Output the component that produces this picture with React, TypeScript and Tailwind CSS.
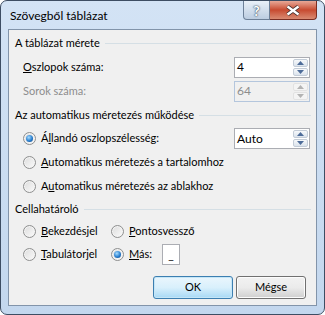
import React from "react";

const font = { fontFamily: 'Lato, "Noto Sans", sans-serif' };

function SpinArrow({ up, disabled }: { up?: boolean; disabled?: boolean }) {
  return (
    <div
      className={
        "flex flex-1 items-center justify-center rounded-[2px] border " +
        (disabled ? "border-[#e2e2e2] bg-[#f4f4f4]" : "border-[#c3ccd7] bg-gradient-to-b from-[#f7f9fb] to-[#dbe3ec]")
      }
    >
      <svg width="7" height="4" viewBox="0 0 7 4">
        <path d={up ? "M0 4 L3.5 0 L7 4 Z" : "M0 0 L3.5 4 L7 0 Z"} fill={disabled ? "#b3b3b3" : "#4d6c99"} />
      </svg>
    </div>
  );
}

function Spin({ value, disabled }: { value: string; disabled?: boolean }) {
  return (
    <div
      className={
        "flex h-[21px] w-[76px] items-stretch border " +
        (disabled ? "border-[#b4c6dd] bg-[#f0f0f0] text-[#8d8d8d]" : "border-[#abadb3] bg-white text-black")
      }
    >
      <div className="flex flex-1 items-center pl-[2px] text-[12px]">{value}</div>
      <div className="flex w-[16px] flex-col gap-px py-px pr-px">
        <SpinArrow up disabled={disabled} />
        <SpinArrow disabled={disabled} />
      </div>
    </div>
  );
}

function Radio({ checked }: { checked?: boolean }) {
  return (
    <div className="flex h-[13px] w-[13px] shrink-0 items-center justify-center rounded-full border border-[#8e8f8f] bg-gradient-to-br from-[#dcdcdc] to-[#fbfbfb] shadow-[inset_0_0_0_1px_#f4f4f4]">
      {checked && (
        <div className="h-[7px] w-[7px] rounded-full bg-[radial-gradient(circle_at_40%_35%,#a6dcff,#2a7fcf_55%,#0c3d78)]" />
      )}
    </div>
  );
}

function GroupHeader({ label, h }: { label: string; h: string }) {
  return (
    <div className={"flex items-center pl-[6px] pr-[5px] " + h}>
      <span>{label}</span>
      <div className="ml-[5px] h-px flex-1 bg-[#d5dfe5]" />
    </div>
  );
}

function RadioLabel({ label, checked }: { label: React.ReactNode; checked?: boolean }) {
  return (
    <div className="flex items-center gap-[5px]">
      <Radio checked={checked} />
      <span>{label}</span>
    </div>
  );
}

export default function App() {
  return (
    <div
      className="flex h-[315px] w-[325px] flex-col rounded-[7px] border border-[#3d4d63] bg-gradient-to-b from-[#d3e3f5] to-[#c3d7ee] text-black"
      style={font}
    >
      <div className="flex h-[28px] shrink-0 items-start">
        <div className="flex h-[29px] flex-1 items-center pl-[9px] text-[12px]">Szövegből táblázat</div>
        <div className="mr-[7px] flex h-[19px]">
          <div className="flex w-[27px] items-center justify-center rounded-bl-[4px] border border-t-0 border-[#6d8098] bg-gradient-to-b from-[#e9f0f8] to-[#bccde1] text-[14px] font-bold text-white [text-shadow:0_0_2px_#2e3f55,0_0_1px_#2e3f55]">
            ?
          </div>
          <div className="flex w-[47px] items-center justify-center rounded-br-[4px] border border-l-0 border-t-0 border-[#7a2d22] bg-gradient-to-b from-[#e7a897] via-[#c74a30] to-[#d98a72]">
            <svg width="14" height="11" viewBox="0 0 14 11">
              <path d="M1.5 1.5 L12.5 9.5 M12.5 1.5 L1.5 9.5" stroke="#3b2a28" strokeWidth="4" />
              <path d="M1.5 1.5 L12.5 9.5 M12.5 1.5 L1.5 9.5" stroke="#ffffff" strokeWidth="2.4" />
            </svg>
          </div>
        </div>
      </div>
      <div className="mx-[7px] mb-[8px] flex flex-1 flex-col border border-[#8294aa] bg-[#f0f0f0] pt-[1px] text-[11px]">
        <GroupHeader label="A táblázat mérete" h="h-[24px]" />
        <div className="flex h-[24px] items-center pl-[14px] pr-[6px]">
          <span className="flex-1">
            <span className="underline">O</span>szlopok száma:
          </span>
          <Spin value="4" />
        </div>
        <div className="flex h-[24px] items-center pl-[14px] pr-[6px] text-[#8d8d8d]">
          <span className="flex-1">Sorok száma:</span>
          <Spin value="64" disabled />
        </div>
        <GroupHeader label="Az automatikus méretezés működése" h="h-[24px]" />
        <div className="flex h-[23px] items-center pl-[14px] pr-[6px]">
          <div className="flex-1">
            <RadioLabel
              checked
              label={
                <>
                  Á<span className="underline">l</span>landó oszlopszélesség:
                </>
              }
            />
          </div>
          <Spin value="Auto" />
        </div>
        <div className="flex h-[24px] items-center pl-[14px]">
          <RadioLabel
            label={
              <>
                <span className="underline">A</span>utomatikus méretezés a tartalomhoz
              </>
            }
          />
        </div>
        <div className="flex h-[24px] items-center pl-[14px]">
          <RadioLabel
            label={
              <>
                A<span className="underline">u</span>tomatikus méretezés az ablakhoz
              </>
            }
          />
        </div>
        <GroupHeader label="Cellahatároló" h="h-[22px]" />
        <div className="grid grid-cols-[88px_auto] grid-rows-[22px_24px] pl-[14px]">
          <div className="flex items-center">
            <RadioLabel label={<><span className="underline">B</span>ekezdésjel</>} />
          </div>
          <div className="flex items-center">
            <RadioLabel label={<><span className="underline">P</span>ontosvessző</>} />
          </div>
          <div className="flex items-center">
            <RadioLabel label={<><span className="underline">T</span>abulátorjel</>} />
          </div>
          <div className="flex items-center">
            <RadioLabel checked label={<><span className="underline">M</span>ás:</>} />
            <div className="ml-[10px] flex h-[21px] w-[18px] items-end justify-center border border-[#abadb3] bg-white pb-[3px] text-[12px] leading-none">
              _
            </div>
          </div>
        </div>
        <div className="mt-[10px] flex justify-end gap-[3px] pr-[10px]">
          <button className="h-[23px] w-[80px] rounded-[3px] border border-[#3c7fb1] bg-gradient-to-b from-[#eaf6fd] via-[#d9f0fc] to-[#a7d9f5] text-[11px] shadow-[inset_0_0_0_1px_#c5e6f7]">
            OK
          </button>
          <button className="h-[23px] w-[70px] rounded-[3px] border border-[#707070] bg-gradient-to-b from-[#f2f2f2] via-[#ebebeb] to-[#cfcfcf] text-[11px] shadow-[inset_0_0_0_1px_#fcfcfc]">
            Mégse
          </button>
        </div>
      </div>
    </div>
  );
}
